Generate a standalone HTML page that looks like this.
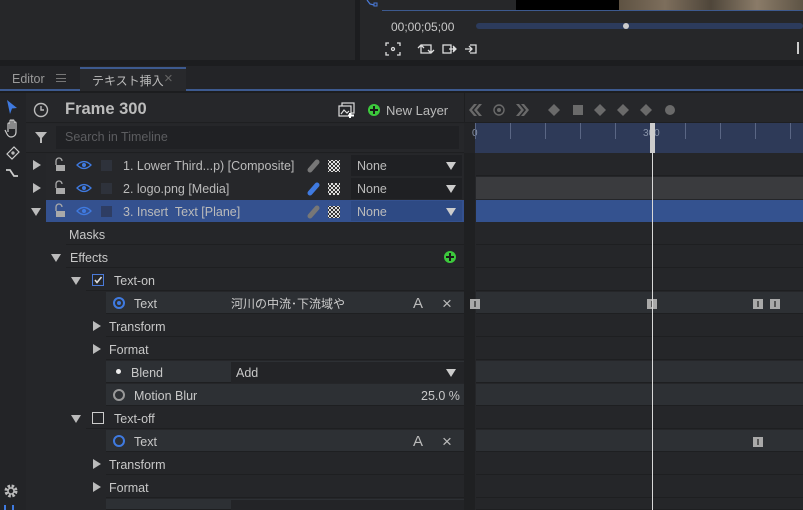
<!DOCTYPE html>
<html><head><meta charset="utf-8">
<style>
*{margin:0;padding:0;box-sizing:border-box}
html,body{width:803px;height:510px;overflow:hidden}
body{background:#1c1d1f;font-family:"Liberation Sans","Noto Sans CJK JP",sans-serif;color:#c8c8c8;font-size:12.5px;position:relative}
.a{position:absolute}
.row{position:absolute;height:22px;line-height:24px;white-space:nowrap}
.tri{position:absolute;width:0;height:0;border-left:8px solid #bbb;border-top:5px solid transparent;border-bottom:5px solid transparent}
.trd{position:absolute;width:0;height:0;border-top:8px solid #bbb;border-left:5px solid transparent;border-right:5px solid transparent}
.kf{position:absolute;width:10px;height:10px;background:#a9a9a9}
.kf:after{content:"";position:absolute;left:4px;top:2px;width:2px;height:6px;background:#555}
.pl{position:absolute;height:22px;background:#252629;border-bottom:1px solid #1e1f21}
.pl.h{background:#2d3034}
</style></head><body>
<div class="a" style="left:0;top:0;width:355px;height:60px;background:#262729"></div>
<div class="a" style="left:360px;top:0;width:443px;height:60px;background:#262729"></div>
<div class="a" style="left:382px;top:0;width:421px;height:11px;border-bottom:1px solid #3d5a8f;background:#262729"></div>
<div class="a" style="left:516px;top:0;width:103px;height:10px;background:#000"></div>
<div class="a" style="left:619px;top:0;width:184px;height:10px;background:linear-gradient(90deg,#5e5242,#7d6e5c,#4f463a,#8a7b68,#5e5445)"></div>
<svg class="a" style="left:366px;top:0" width="12" height="8"><path d="M1 0 L4 4 L8 5" stroke="#4a7ad8" fill="none" stroke-width="1.2"/><rect x="8" y="3" width="3" height="3" fill="none" stroke="#4a7ad8"/></svg>
<div class="a" style="left:391px;top:20px;font-size:12px;color:#c8c8c8">00;00;05;00</div>
<div class="a" style="left:476px;top:23px;width:327px;height:6px;border-radius:3px;background:#2c3b5c"></div>
<div class="a" style="left:623px;top:23px;width:6px;height:6px;border-radius:3px;background:#ccc"></div>
<svg class="a" style="left:385px;top:42px" width="100" height="14" fill="none" stroke="#ddd" stroke-width="1.3">
<path d="M1 4V1H4M12 1H15V4M15 10V13H12M4 13H1V10"/><circle cx="8" cy="7" r="1.5"/>
<path d="M36 3H46V10M43 8L46 11L49 8M46 11H36V4M33 6L36 3L39 6"/>
<rect x="58" y="3" width="8" height="8"/><path d="M64 7H71M68 4L71 7L68 10" fill="#ddd"/>
<path d="M80 7H87M84 4L87 7L84 10"/><path d="M85 3H91V11H85"/>
</svg>
<div class="a" style="left:797px;top:42px;width:2px;height:12px;background:#ccc"></div>
<div class="a" style="left:0;top:66px;width:803px;height:25px;background:#232427;border-bottom:2px solid #3d5a8f"></div>
<div class="a" style="left:12px;top:72px;font-size:12.5px;color:#9a9a9a">Editor</div>
<div class="a" style="left:56px;top:74px;width:10px;height:8px;border-top:1px solid #777;border-bottom:1px solid #777"></div>
<div class="a" style="left:56px;top:78px;width:10px;height:1px;background:#777"></div>
<div class="a" style="left:80px;top:67px;width:106px;height:24px;background:#28292c;border-top:2px solid #3d5a8f"></div>
<div class="a" style="left:92px;top:72px;font-size:12px;color:#bbb">テキスト挿入</div>
<div class="a" style="left:164px;top:70px;font-size:15px;color:#666">×</div>
<div class="a" style="left:0;top:93px;width:26px;height:417px;background:#232427"></div>
<svg class="a" style="left:4px;top:98px" width="18" height="84" fill="none" stroke="#ccc" stroke-width="1.2">
<path d="M3 2L13 10L8 10.5L6 16Z" fill="#3f7ae0" stroke="none"/>
<path d="M4 34V26a1 1 0 012 0v5V23a1 1 0 012 0v8V23a1 1 0 012 0v8V25a1 1 0 012 0v9c0 3-2 5-5 5c-2 0-3-1-4-3l-2-4"/>
<path d="M3 56L10 49L15 54L8 61Z"/><circle cx="9" cy="55" r="1"/>
<path d="M2 72L6 72L10 78L14 78" stroke-width="1.8"/>
</svg>
<svg class="a" style="left:3px;top:483px" width="16" height="16"><circle cx="8" cy="8" r="5" fill="none" stroke="#bbb" stroke-width="3" stroke-dasharray="2.5 1.5"/><circle cx="8" cy="8" r="3" fill="none" stroke="#bbb" stroke-width="1.5"/></svg>
<div class="a" style="left:4px;top:505px;width:10px;height:5px;border-left:2px solid #3f7ae0;border-right:2px solid #3f7ae0"></div>
<div class="a" style="left:26px;top:93px;width:777px;height:417px;background:#252629"></div>
<div class="a" style="left:26px;top:93px;width:438px;height:30px;background:#26272a;border-bottom:1px solid #1e1f21"></div>
<svg class="a" style="left:33px;top:102px" width="16" height="16" fill="none" stroke="#bbb" stroke-width="1.4"><circle cx="8" cy="8" r="6.5"/><path d="M8 4V8H11"/></svg>
<div class="a" style="left:65px;top:100px;font-size:16.5px;font-weight:bold;color:#bcbcbc">Frame 300</div>
<svg class="a" style="left:338px;top:102px" width="18" height="16" fill="none" stroke="#ddd" stroke-width="1.2"><rect x="4" y="1" width="12" height="10"/><rect x="1" y="4" width="12" height="10" fill="#26272a"/><path d="M3 12L6 8L9 11L11 9"/><path d="M12 11V16M10 13.5H16" stroke-width="2" stroke="#fff"/></svg>
<div class="a" style="left:368px;top:104px;width:12px;height:12px;border-radius:6px;background:#3cc93c"></div>
<div class="a" style="left:373px;top:106px;width:2px;height:8px;background:#1a1a1a"></div>
<div class="a" style="left:370px;top:109px;width:8px;height:2px;background:#1a1a1a"></div>
<div class="a" style="left:386px;top:103px;font-size:13px;color:#bbb">New Layer</div>
<div class="a" style="left:464px;top:93px;width:339px;height:30px;background:#26272a;border-left:1px solid #1e1f21;border-bottom:1px solid #1e1f21"></div>
<svg class="a" style="left:468px;top:102px" width="220" height="16" fill="#6a6a6a">
<path d="M1 8L6 2H9L4 8L9 14H6Z M6 8L11 2H14L9 8L14 14H11Z"/>
<circle cx="31" cy="8" r="5" fill="none" stroke="#6a6a6a" stroke-width="1.4"/><circle cx="31" cy="8" r="2"/>
<path d="M48 2H51L56 8L51 14H48L53 8Z M53 2H56L61 8L56 14H53L58 8Z"/>
<path d="M86 2L92 8L86 14L80 8Z"/><rect x="105" y="3" width="10" height="10"/>
<path d="M132 2L138 8L132 14L126 8Z"/><path d="M155 2L161 8L155 14L149 8Z"/><path d="M178 2L184 8L178 14L172 8Z"/>
<circle cx="202" cy="8" r="5"/>
</svg>
<div class="a" style="left:26px;top:124px;width:438px;height:29px;background:#26272a;border-bottom:1px solid #1e1f21"></div>
<svg class="a" style="left:34px;top:130px" width="14" height="14"><path d="M1 2H13L8 8V13H6V8Z" fill="#bbb"/></svg>
<div class="a" style="left:56px;top:126px;width:403px;height:23px;background:#202124"></div>
<div class="a" style="left:65px;top:130px;font-size:12.5px;color:#5c5d60">Search in Timeline</div>
<div class="a" style="left:464px;top:123px;width:11px;height:30px;background:#232427"></div>
<div class="a" style="left:475px;top:123px;width:328px;height:30px;background:#2e3a58"></div>
<div class="a" style="left:472px;top:128px;font-size:10px;color:#8893a8">0</div>
<div class="a" style="left:643px;top:128px;font-size:10px;color:#8893a8">300</div>
<div class="a" style="left:475px;top:123px;width:328px;height:16px;background:repeating-linear-gradient(90deg,#5a6684 0,#5a6684 1px,transparent 1px,transparent 35px)"></div>
<div class="a" style="left:650px;top:123px;width:5px;height:30px;background:#ccc"></div>
<div class="a" style="left:652px;top:153px;width:1px;height:357px;background:#d8d8d8;z-index:5"></div>
<div class="a" style="left:464px;top:153px;width:11px;height:357px;background:#1f2022"></div>
<div class="a" style="left:46px;top:154px;width:418px;height:68px;background:#26272a"></div>
<div class="a" style="left:46px;top:200px;width:418px;height:22px;background:#34518f"></div>
<div class="a" style="left:476px;top:154px;width:327px;height:22px;background:#252629;border-bottom:1px solid #1e1f21"></div>
<div class="a" style="left:476px;top:177px;width:327px;height:22px;background:#3a3b3e"></div>
<div class="a" style="left:476px;top:200px;width:327px;height:22px;background:#34528f"></div>
<div class="tri" style="left:33px;top:160px"></div>
<div class="tri" style="left:33px;top:183px"></div>
<div class="trd" style="left:31px;top:208px"></div>
<svg class="a" style="left:52px;top:157px" width="70" height="64" fill="none">
<g stroke="#aaa" stroke-width="1.3"><path d="M4 8V4a3 3 0 016 0"/><path d="M4 31V27a3 3 0 016 0"/><path d="M4 54V50a3 3 0 016 0"/></g>
<g fill="#aaa"><rect x="4" y="8" width="9" height="6"/><rect x="4" y="31" width="9" height="6"/><rect x="4" y="54" width="9" height="6"/></g>
<g stroke="#3f7ae0" stroke-width="1.3"><path d="M25 8Q32 1 39 8Q32 15 25 8Z"/><path d="M25 31Q32 24 39 31Q32 38 25 31Z"/><path d="M25 54Q32 47 39 54Q32 61 25 54Z"/></g>
<g fill="#3f7ae0"><circle cx="32" cy="8" r="2"/><circle cx="32" cy="31" r="2"/><circle cx="32" cy="54" r="2"/></g>
<rect x="49" y="3" width="11" height="11" fill="#2e323b"/><rect x="49" y="26" width="11" height="11" fill="#2e323b"/><rect x="49" y="49" width="11" height="11" fill="#2e3d63"/>
</svg>
<div class="row" style="left:123px;top:154px;color:#bbb">1. Lower Third...p) [Composite]</div>
<div class="row" style="left:123px;top:177px;color:#bbb">2. logo.png [Media]</div>
<div class="row" style="left:123px;top:200px;color:#bbb">3. Insert&nbsp; Text [Plane]</div>
<svg class="a" style="left:303px;top:157px" width="40" height="64">
<g stroke-width="5" stroke-linecap="round"><path d="M7 13L14 5" stroke="#777"/><path d="M7 36L14 28" stroke="#3f7ae0"/><path d="M7 59L14 51" stroke="#777"/></g>
<defs><pattern id="ck" width="4" height="4" patternUnits="userSpaceOnUse"><rect width="4" height="4" fill="#ddd"/><rect width="2" height="2" fill="#333"/><rect x="2" y="2" width="2" height="2" fill="#333"/></pattern></defs>
<rect x="25" y="3" width="12" height="12" fill="url(#ck)"/><rect x="25" y="26" width="12" height="12" fill="url(#ck)"/><rect x="25" y="49" width="12" height="12" fill="url(#ck)"/>
</svg>
<div class="a" style="left:351px;top:155px;width:111px;height:21px;background:#1f2023"></div>
<div class="a" style="left:351px;top:178px;width:111px;height:21px;background:#1f2023"></div>
<div class="a" style="left:351px;top:201px;width:111px;height:20px;background:#2e4a84"></div>
<div class="row" style="left:357px;top:154px;color:#bbb">None</div>
<div class="row" style="left:357px;top:177px;color:#bbb">None</div>
<div class="row" style="left:357px;top:200px;color:#bbb">None</div>
<div class="trd" style="left:446px;top:162px;border-top-color:#ccc"></div>
<div class="trd" style="left:446px;top:185px;border-top-color:#ccc"></div>
<div class="trd" style="left:446px;top:208px;border-top-color:#ccc"></div>
<div class="pl" style="left:66px;top:223px;width:398px"></div>
<div class="pl" style="left:66px;top:246px;width:398px"></div>
<div class="pl" style="left:86px;top:269px;width:378px"></div>
<div class="pl h" style="left:106px;top:292px;width:358px"></div>
<div class="pl" style="left:106px;top:315px;width:358px"></div>
<div class="pl" style="left:106px;top:338px;width:358px"></div>
<div class="pl h" style="left:106px;top:361px;width:358px"></div>
<div class="pl h" style="left:106px;top:384px;width:358px"></div>
<div class="pl" style="left:86px;top:407px;width:378px"></div>
<div class="pl h" style="left:106px;top:430px;width:358px"></div>
<div class="pl" style="left:106px;top:453px;width:358px"></div>
<div class="pl" style="left:106px;top:476px;width:358px"></div>
<div class="pl h" style="left:106px;top:499px;width:358px;height:11px"></div>
<div class="pl" style="left:476px;top:223px;width:327px"></div>
<div class="pl" style="left:476px;top:246px;width:327px"></div>
<div class="pl" style="left:476px;top:269px;width:327px"></div>
<div class="pl h" style="left:476px;top:292px;width:327px"></div>
<div class="pl" style="left:476px;top:315px;width:327px"></div>
<div class="pl" style="left:476px;top:338px;width:327px"></div>
<div class="pl h" style="left:476px;top:361px;width:327px"></div>
<div class="pl h" style="left:476px;top:384px;width:327px"></div>
<div class="pl" style="left:476px;top:407px;width:327px"></div>
<div class="pl h" style="left:476px;top:430px;width:327px"></div>
<div class="pl" style="left:476px;top:453px;width:327px"></div>
<div class="pl" style="left:476px;top:476px;width:327px"></div>
<div class="pl" style="left:476px;top:499px;width:327px;height:11px"></div>
<div class="a" style="left:231px;top:362px;width:233px;height:21px;background:#232427"></div>
<div class="a" style="left:231px;top:500px;width:233px;height:10px;background:#232427"></div>
<div class="row" style="left:69px;top:223px">Masks</div>
<div class="trd" style="left:51px;top:254px"></div>
<div class="row" style="left:70px;top:246px">Effects</div>
<div class="a" style="left:444px;top:251px;width:12px;height:12px;border-radius:6px;background:#3cc93c"></div>
<div class="a" style="left:449px;top:253px;width:2px;height:8px;background:#1a1a1a"></div>
<div class="a" style="left:446px;top:256px;width:8px;height:2px;background:#1a1a1a"></div>
<div class="trd" style="left:71px;top:277px"></div>
<div class="a" style="left:92px;top:274px;width:12px;height:12px;border:1px solid #4a7ad8"></div>
<svg class="a" style="left:93px;top:275px" width="10" height="10"><path d="M2 5L4 7.5L8.5 2" stroke="#ddd" stroke-width="1.6" fill="none"/></svg>
<div class="row" style="left:114px;top:269px">Text-on</div>
<div class="a" style="left:113px;top:297px;width:12px;height:12px;border-radius:6px;border:2px solid #3f7ae0"></div>
<div class="a" style="left:117px;top:301px;width:4px;height:4px;border-radius:2px;background:#3f7ae0"></div>
<div class="row" style="left:134px;top:292px">Text</div>
<div class="row" style="left:231px;top:292px;color:#ccc;font-size:12px">河川の中流･下流域や</div>
<div class="row" style="left:413px;top:292px;font-size:15px;color:#bbb">A</div>
<div class="row" style="left:442px;top:292px;font-size:17px;color:#bbb">×</div>
<div class="tri" style="left:93px;top:321px"></div>
<div class="row" style="left:109px;top:315px">Transform</div>
<div class="tri" style="left:93px;top:344px"></div>
<div class="row" style="left:109px;top:338px">Format</div>
<div class="a" style="left:116px;top:369px;width:5px;height:5px;border-radius:3px;background:#eee"></div>
<div class="row" style="left:131px;top:361px">Blend</div>
<div class="row" style="left:236px;top:361px">Add</div>
<div class="trd" style="left:446px;top:369px;border-top-color:#ccc"></div>
<div class="a" style="left:113px;top:389px;width:12px;height:12px;border-radius:6px;border:2px solid #999"></div>
<div class="row" style="left:134px;top:384px">Motion Blur</div>
<div class="row" style="left:421px;top:384px">25.0 %</div>
<div class="trd" style="left:71px;top:415px"></div>
<div class="a" style="left:92px;top:412px;width:12px;height:12px;border:1px solid #ccc"></div>
<div class="row" style="left:114px;top:407px">Text-off</div>
<div class="a" style="left:113px;top:435px;width:12px;height:12px;border-radius:6px;border:2px solid #3f7ae0"></div>
<div class="row" style="left:134px;top:430px">Text</div>
<div class="row" style="left:413px;top:430px;font-size:15px;color:#bbb">A</div>
<div class="row" style="left:442px;top:430px;font-size:17px;color:#bbb">×</div>
<div class="tri" style="left:93px;top:459px"></div>
<div class="row" style="left:109px;top:453px">Transform</div>
<div class="tri" style="left:93px;top:482px"></div>
<div class="row" style="left:109px;top:476px">Format</div>
<div class="kf" style="left:470px;top:299px"></div>
<div class="kf" style="left:647px;top:299px"></div>
<div class="kf" style="left:753px;top:299px"></div>
<div class="kf" style="left:770px;top:299px"></div>
<div class="kf" style="left:753px;top:437px"></div>
</body></html>
